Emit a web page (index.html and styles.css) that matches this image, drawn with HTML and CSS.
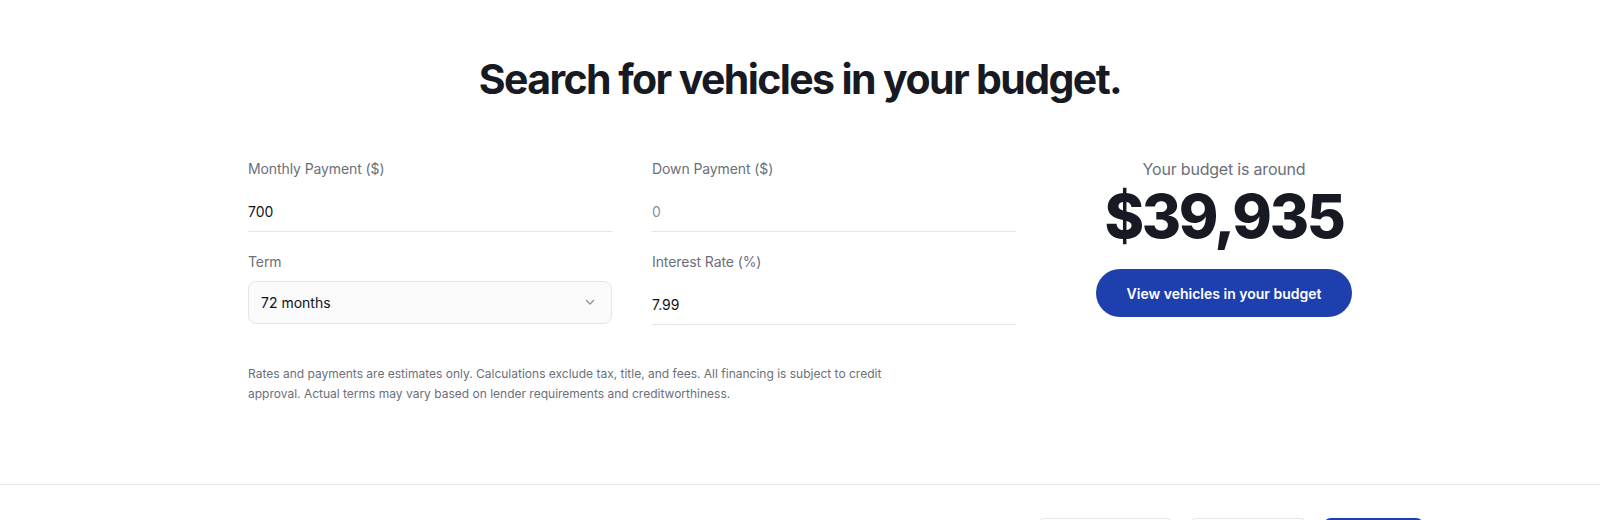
FILE: index.html
```html
<!DOCTYPE html>
<html>
<title>Budget Calculator</title>

<head>
    <meta charset="utf-8">
    <link rel="stylesheet" href="styles.css">
</head>

<body>
    <div class="budget">
        <h1>Search for vehicles in your budget.</h1>
        <div class="budget-body">
            <div class="calc">
                <form class="fields">
                    <div class="field">
                        <label for="monthly">Monthly Payment ($)</label>
                        <input id="monthly" type="text" value="700" />
                    </div>
                    <div class="field">
                        <label for="down">Down Payment ($)</label>
                        <input id="down" type="text" placeholder="0" />
                    </div>
                    <div class="field">
                        <label for="term">Term</label>
                        <div class="select-wrap">
                            <select id="term">
                                <option>36 months</option>
                                <option>48 months</option>
                                <option>60 months</option>
                                <option selected>72 months</option>
                                <option>84 months</option>
                            </select>
                            <svg class="chevron" width="12" height="12" viewBox="0 0 12 12" fill="none">
                                <path d="M2.5 4.5 6 8l3.5-3.5" stroke="#8b8f98" stroke-width="1.3" stroke-linecap="round" stroke-linejoin="round" />
                            </svg>
                        </div>
                    </div>
                    <div class="field">
                        <label for="rate">Interest Rate (%)</label>
                        <input id="rate" type="text" value="7.99" />
                    </div>
                </form>
                <p class="disclaimer">
                    Rates and payments are estimates only. Calculations exclude tax, title, and fees. All financing is subject to credit
                    approval. Actual terms may vary based on lender requirements and creditworthiness.
                </p>
            </div>
            <div class="result">
                <div class="result-label">Your budget is around</div>
                <div id="total" class="result-total">$39,935</div>
                <button class="btn-primary">View vehicles in your budget</button>
            </div>
        </div>
    </div>

    <div class="footer">
        <div class="footer-inner">
            <button class="btn-outline wide">&nbsp;</button>
            <button class="btn-outline">&nbsp;</button>
            <button class="btn-solid">&nbsp;</button>
        </div>
    </div>
</body>

</html>
```

FILE: styles.css
```css
body {
    font-family: Inter, "Noto Sans", sans-serif;
    background-color: #fff;
    color: #171a23;
    margin: 0;
    padding: 0;
    height: 520px;
    overflow: hidden;
}

.budget {
    max-width: 1104px;
    margin: 0 auto;
    padding: 55px 0 80px;
}

h1 {
    margin: 0;
    font-size: 41px;
    line-height: 48px;
    font-weight: 700;
    letter-spacing: -1.6px;
    text-align: center;
    color: #171a23;
}

.budget-body {
    display: flex;
    margin-top: 56px;
}

.calc {
    width: 768px;
}

.fields {
    display: grid;
    grid-template-columns: 1fr 1fr;
    column-gap: 40px;
    row-gap: 20px;
}

.field label {
    display: block;
    font-size: 14px;
    line-height: 20px;
    letter-spacing: -0.1px;
    color: #6b6f7a;
    margin-bottom: 9px;
}

.field input {
    display: block;
    width: 100%;
    box-sizing: border-box;
    height: 44px;
    border: none;
    border-bottom: 1px solid #e4e5e8;
    padding: 3px 0 0;
    font-family: inherit;
    font-size: 14px;
    color: #111318;
    background: transparent;
    outline: none;
}

.field input::placeholder {
    color: #8b8f98;
}

.select-wrap {
    position: relative;
}

.select-wrap select {
    display: block;
    width: 100%;
    height: 43px;
    box-sizing: border-box;
    appearance: none;
    -webkit-appearance: none;
    border: 1px solid #e4e5e8;
    border-radius: 8px;
    background-color: #fafafa;
    padding: 0 12px;
    font-family: inherit;
    font-size: 14px;
    color: #111318;
    outline: none;
}

.chevron {
    position: absolute;
    right: 16px;
    top: 15px;
    pointer-events: none;
}

.disclaimer {
    margin: 39px 0 0;
    max-width: 660px;
    font-size: 12px;
    line-height: 20px;
    color: #6b6f7a;
}

.result {
    width: 256px;
    margin-left: 80px;
    margin-top: -2px;
    display: flex;
    flex-direction: column;
    align-items: center;
}

.result-label {
    font-size: 16px;
    line-height: 24px;
    letter-spacing: -0.2px;
    color: #6b6f7a;
    white-space: nowrap;
}

.result-total {
    font-size: 60px;
    line-height: 60px;
    font-weight: 800;
    letter-spacing: -2.3px;
    margin-top: 5px;
    color: #171a23;
    white-space: nowrap;
}

.btn-primary {
    margin-top: 23px;
    width: 256px;
    height: 48px;
    border: none;
    border-radius: 24px;
    background-color: #1e40af;
    color: #fff;
    font-family: inherit;
    font-size: 14px;
    font-weight: 600;
    cursor: pointer;
}

.btn-primary:hover {
    background-color: #1b3a9e;
}

.footer {
    border-top: 1px solid #e4e5e8;
    padding-top: 33px;
}

.footer-inner {
    max-width: 1248px;
    margin: 0 auto;
    display: flex;
    justify-content: flex-end;
    gap: 15px;
}

.btn-outline,
.btn-solid {
    height: 40px;
    border-radius: 8px;
    font-family: inherit;
    font-size: 14px;
}

.btn-outline {
    width: 119px;
    border: 1px solid #e4e5e8;
    background: #fff;
}

.btn-outline.wide {
    width: 137px;
}

.btn-solid {
    width: 101px;
    border: none;
    background-color: #1e40af;
}
```
